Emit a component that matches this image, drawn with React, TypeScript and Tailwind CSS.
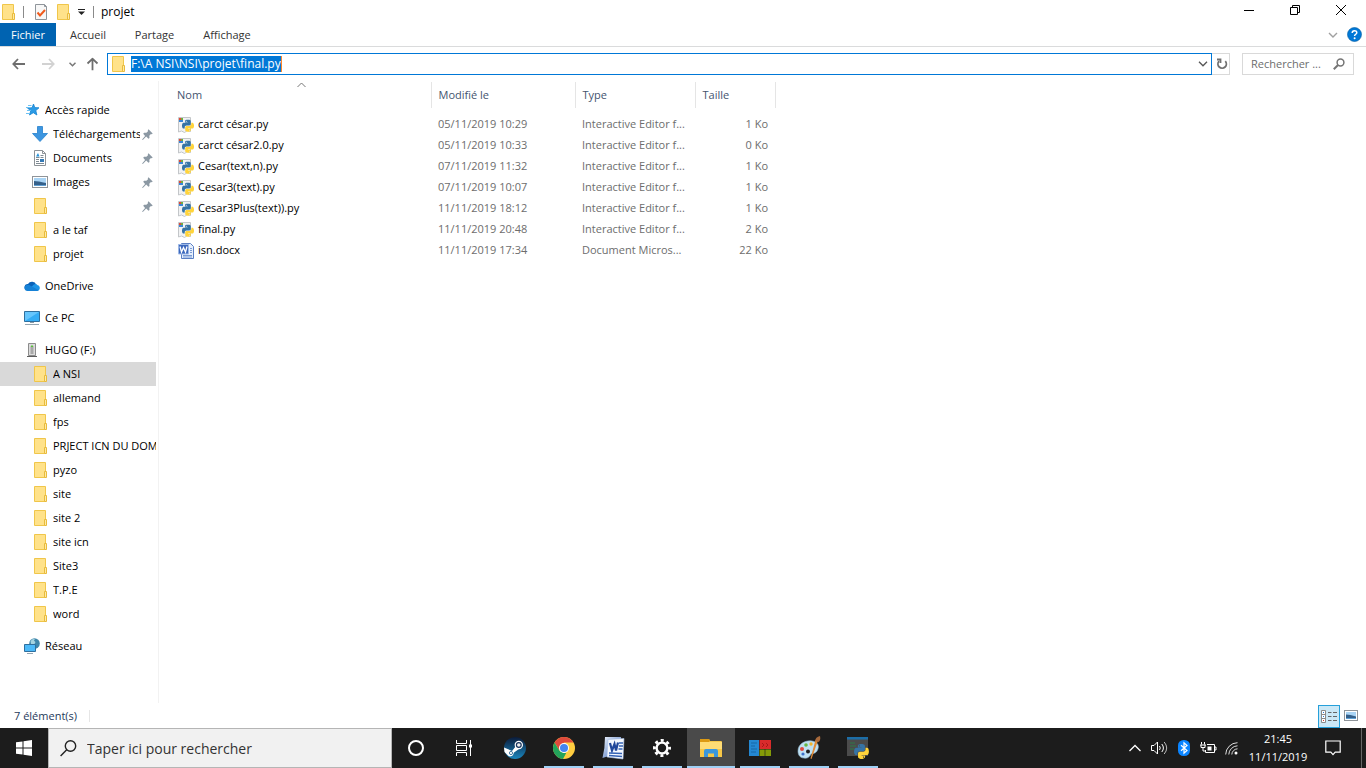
import type { ReactNode } from 'react';

type IconName = 'star' | 'download' | 'document' | 'images' | 'folder' | 'onedrive' | 'pc' | 'usb' | 'network';

interface NavItem {
  icon: IconName;
  label: string;
  root?: boolean;
  pinned?: boolean;
  selected?: boolean;
}

interface FileRow {
  name: string;
  date: string;
  type: string;
  size: string;
}

const NAV_GROUPS: NavItem[][] = [
  [
    { icon: 'star', label: 'Accès rapide', root: true },
    { icon: 'download', label: 'Téléchargements', pinned: true },
    { icon: 'document', label: 'Documents', pinned: true },
    { icon: 'images', label: 'Images', pinned: true },
    { icon: 'folder', label: '', pinned: true },
    { icon: 'folder', label: 'a le taf' },
    { icon: 'folder', label: 'projet' },
  ],
  [{ icon: 'onedrive', label: 'OneDrive', root: true }],
  [{ icon: 'pc', label: 'Ce PC', root: true }],
  [
    { icon: 'usb', label: 'HUGO (F:)', root: true },
    { icon: 'folder', label: 'A NSI', selected: true },
    { icon: 'folder', label: 'allemand' },
    { icon: 'folder', label: 'fps' },
    { icon: 'folder', label: 'PRJECT ICN DU DOM' },
    { icon: 'folder', label: 'pyzo' },
    { icon: 'folder', label: 'site' },
    { icon: 'folder', label: 'site 2' },
    { icon: 'folder', label: 'site icn' },
    { icon: 'folder', label: 'Site3' },
    { icon: 'folder', label: 'T.P.E' },
    { icon: 'folder', label: 'word' },
  ],
  [{ icon: 'network', label: 'Réseau', root: true }],
];

const FILES: FileRow[] = [
  { name: 'carct césar.py', date: '05/11/2019 10:29', type: 'Interactive Editor f...', size: '1 Ko' },
  { name: 'carct césar2.0.py', date: '05/11/2019 10:33', type: 'Interactive Editor f...', size: '0 Ko' },
  { name: 'Cesar(text,n).py', date: '07/11/2019 11:32', type: 'Interactive Editor f...', size: '1 Ko' },
  { name: 'Cesar3(text).py', date: '07/11/2019 10:07', type: 'Interactive Editor f...', size: '1 Ko' },
  { name: 'Cesar3Plus(text)).py', date: '11/11/2019 18:12', type: 'Interactive Editor f...', size: '1 Ko' },
  { name: 'final.py', date: '11/11/2019 20:48', type: 'Interactive Editor f...', size: '2 Ko' },
  { name: 'isn.docx', date: '11/11/2019 17:34', type: 'Document Micros...', size: '22 Ko' },
];

export default function App() {
  return (
    <div className="flex h-screen flex-col overflow-hidden bg-white font-['Open_Sans','Noto_Sans',sans-serif] text-[11px] text-black">
      <TitleBar />
      <Ribbon />
      <AddressRow />
      <main className="flex min-h-0 flex-1">
        <Sidebar />
        <FileTable />
      </main>
      <StatusBar />
      <Taskbar />
    </div>
  );
}

function TitleBar() {
  return (
    <header className="flex h-[23px] shrink-0 items-center">
      <FolderIcon />
      <span className="ml-[7px] h-3 w-px bg-[#8a8a8a]" />
      <button type="button" aria-label="Propriétés" className="ml-[9px]">
        <svg width="16" height="16" viewBox="0 0 16 16">
          <path d="M2.500.5h9l2 2v13h-11z" fill="#f7f7f7" stroke="#8f959b" />
          <path d="M11.500.5v2h2" fill="none" stroke="#8f959b" />
          <path d="M4.500 8.500l2.500 3 5-5.500" fill="none" stroke="#f05a1c" strokeWidth="2" />
        </svg>
      </button>
      <button type="button" aria-label="Nouveau dossier" className="ml-1.5">
        <FolderIcon />
      </button>
      <button type="button" aria-label="Personnaliser" className="ml-1.5">
        <svg width="9" height="8" viewBox="0 0 9 8">
          <path d="M1 1.500h7" stroke="#222" />
          <path d="M1 3.500h7l-3.500 3.500z" fill="#222" />
        </svg>
      </button>
      <span className="ml-[7px] h-3 w-px bg-[#8a8a8a]" />
      <h1 className="ml-[7px] text-xs">projet</h1>
      <div className="mr-0.5 ml-auto flex items-center pb-1">
        <button type="button" aria-label="Réduire" className="flex w-[46px] justify-center">
          <svg width="10" height="10" viewBox="0 0 10 10">
            <path d="M0 5.500h10" stroke="#000" />
          </svg>
        </button>
        <button type="button" aria-label="Restaurer" className="flex w-[46px] justify-center">
          <svg width="10" height="10" viewBox="0 0 10 10" fill="none" stroke="#000">
            <path d="M.5 2.500h7v7h-7zM2.500 2.500v-2h7v7h-2" />
          </svg>
        </button>
        <button type="button" aria-label="Fermer" className="flex w-[46px] justify-center">
          <svg width="10" height="10" viewBox="0 0 10 10" stroke="#000">
            <path d="M0 0l10 10M10 0L0 10" />
          </svg>
        </button>
      </div>
    </header>
  );
}

function Ribbon() {
  return (
    <nav className="flex h-6 shrink-0 items-stretch border-b border-[#dadbdc] text-[#333]">
      <button type="button" className="w-14 bg-[#0063b1] pt-0.5 text-white">Fichier</button>
      <button type="button" className="w-16 pt-0.5">Accueil</button>
      <button type="button" className="w-[69px] pt-0.5">Partage</button>
      <button type="button" className="w-[76px] pt-0.5">Affichage</button>
      <button type="button" aria-label="Développer le ruban" className="ml-auto">
        <svg width="10" height="6" viewBox="0 0 10 6" fill="none" stroke="#a0a0a0" strokeWidth="1.400">
          <path d="M1 1l4 4 4-4" />
        </svg>
      </button>
      <button type="button" aria-label="Aide" className="mr-1 ml-[9px]">
        <svg width="15" height="15" viewBox="0 0 15 15">
          <circle cx="7.500" cy="7.500" r="7" fill="#0078d7" stroke="#005a9e" strokeWidth=".6" />
          <path d="M5.200 6c0-3 4.600-3 4.600-.3 0 1.500-2.200 1.600-2.200 3.200" fill="none" stroke="#fff" strokeWidth="1.500" />
          <circle cx="7.600" cy="11.200" r="1" fill="#fff" />
        </svg>
      </button>
    </nav>
  );
}

function AddressRow() {
  return (
    <div className="flex h-[34px] shrink-0 items-center">
      <button type="button" aria-label="Précédent" className="ml-3">
        <ArrowIcon className="text-[#6e6e6e]" />
      </button>
      <button type="button" aria-label="Suivant" className="ml-[17px]">
        <ArrowIcon className="rotate-180 text-[#d2d2d2]" />
      </button>
      <button type="button" aria-label="Emplacements récents" className="ml-3.5">
        <svg width="7" height="5" viewBox="0 0 7 5" fill="none" stroke="#777" strokeWidth="1.500">
          <path d="M.5.8l3 3 3-3" />
        </svg>
      </button>
      <button type="button" aria-label="Dossier parent" className="ml-2.5">
        <ArrowIcon className="rotate-90 text-[#6e6e6e]" />
      </button>
      <div className="ml-2 flex h-[22px] min-w-0 flex-1 items-center border border-[#0078d7] pl-0.5">
        <FolderIcon />
        <input
          aria-label="Adresse"
          defaultValue="F:\A NSI\NSI\projet\final.py"
          className="ml-[5px] h-4 field-sizing-content border-r border-[#ff8728] bg-[#0078d7] text-xs text-white outline-none"
        />
        <button type="button" aria-label="Adresses précédentes" className="mr-[3px] ml-auto">
          <svg width="10" height="6" viewBox="0 0 10 6" fill="none" stroke="#555" strokeWidth="1.300">
            <path d="M1 .8l4 4 4-4" />
          </svg>
        </button>
      </div>
      <button type="button" aria-label="Actualiser" className="flex h-[22px] w-[18px] items-center justify-center border border-l-0 border-[#d9d9d9] pl-0.5">
        <svg width="12" height="12" viewBox="0 0 12 12" fill="none" stroke="#707070" strokeWidth="1.800">
          <path d="M9.300 3.200A4.200 4.200 0 1 1 3 3.200" />
          <path d="M1 1.500h3.500V5" />
        </svg>
      </button>
      <label className="mr-3 ml-3 flex h-[22px] w-28 items-center border border-[#d9d9d9] pr-2 pl-2">
        <input
          aria-label="Rechercher dans projet"
          placeholder="Rechercher ..."
          className="w-20 flex-1 placeholder-[#6d6d6d] outline-none"
        />
        <svg width="12" height="12" viewBox="0 0 12 12" fill="none" stroke="#757575">
          <circle cx="7.500" cy="4.500" r="3.400" strokeWidth="1.500" />
          <path d="M5 7L.8 11.200" strokeWidth="2" />
        </svg>
      </label>
    </div>
  );
}

function Sidebar() {
  return (
    <aside className="flex w-[159px] shrink-0 flex-col gap-2 overflow-hidden border-r border-[#f2f2f2] pt-[17px] pr-0.5">
      {NAV_GROUPS.map((group) => (
        <ul key={group[0].label}>
          {group.map((item, i) => (
            <NavRow key={i} item={item} />
          ))}
        </ul>
      ))}
    </aside>
  );
}

function NavRow({ item }: { item: NavItem }) {
  const indent = item.root ? 'pl-6' : 'pl-8';
  const bg = item.selected ? 'bg-[#d9d9d9]' : '';
  return (
    <li>
      <a href="#" aria-label={item.label || 'Dossier'} className={`flex h-6 items-center ${indent} ${bg}`}>
        <NavIcon name={item.icon} />
        <span className="ml-[5px] min-w-0 flex-1 overflow-hidden whitespace-nowrap">{item.label}</span>
        {item.pinned && <PinIcon />}
      </a>
    </li>
  );
}

function FileTable() {
  return (
    <section className="min-w-0 flex-1 pt-px pl-2.5">
      <table className="table-fixed border-collapse text-left whitespace-nowrap">
        <colgroup>
          <col className="w-[262px]" />
          <col className="w-36" />
          <col className="w-[120px]" />
          <col className="w-20" />
        </colgroup>
        <thead className="text-[#44546f]">
          <tr className="h-[26px]">
            <th className="relative border-r border-[#e5e5e5] pl-2 font-normal">
              Nom
              <svg className="absolute top-0 left-32" width="9" height="6" viewBox="0 0 9 6" fill="none" stroke="#777">
                <path d="M.5 5l4-4 4 4" />
              </svg>
            </th>
            <th className="border-r border-[#e5e5e5] pl-[7px] font-normal">Modifié le</th>
            <th className="border-r border-[#e5e5e5] pl-[7px] font-normal">Type</th>
            <th className="border-r border-[#e5e5e5] pl-[7px] font-normal">Taille</th>
          </tr>
        </thead>
        <tbody className="text-[#6d6d6d] before:block before:h-1.5">
          {FILES.map((file) => (
            <tr key={file.name} className="h-[21px]">
              <td className="p-0 pl-[9px] text-black">
                <div className="flex items-center gap-1">
                  {file.name.endsWith('.py') ? <PyFileIcon /> : <WordFileIcon />}
                  {file.name}
                </div>
              </td>
              <td className="p-0 pl-[7px]">{file.date}</td>
              <td className="p-0 pl-[7px]">{file.type}</td>
              <td className="p-0 pr-[7px] text-right">{file.size}</td>
            </tr>
          ))}
        </tbody>
      </table>
    </section>
  );
}

function StatusBar() {
  return (
    <footer className="flex h-[25px] shrink-0 items-center pl-3.5 text-[#1e395b]">
      <span className="pt-0.5">7 élément(s)</span>
      <span className="ml-3 h-3 w-px bg-[#e6e6e6]" />
      <button type="button" aria-label="Détails" className="ml-auto flex h-[23px] w-[22px] items-center justify-center self-end border border-[#26a0da] bg-[#cbe8f6]">
        <svg width="16" height="13" viewBox="0 0 16 13" fill="none">
          <path d="M.5.500h4v12h-4zM.5 4.500h4M.5 8.500h4" fill="#fff" stroke="#8a8a8a" />
          <path d="M7 2.500h3.500M12 2.500h4M7 6.500h3.500M12 6.500h4M7 10.500h3.500M12 10.500h4" stroke="#666" />
          <path d="M2 2.500h1M2 6.500h1" stroke="#2a7bd0" />
          <path d="M2 10.500h1" stroke="#d03b2a" />
        </svg>
      </button>
      <button type="button" aria-label="Grandes icônes" className="mr-2 ml-1">
        <svg width="14" height="11" viewBox="0 0 14 11">
          <PictureShape w={14} h={11} />
        </svg>
      </button>
    </footer>
  );
}

function Taskbar() {
  return (
    <div className="flex h-10 shrink-0 bg-[#1c1c1c]">
      <button type="button" aria-label="Démarrer" className="flex w-12 items-center justify-center">
        <svg width="16" height="16" viewBox="0 0 16 16" fill="#fff">
          <path d="M0 2.300L6.500 1.400v6.100H0zM7.500 1.200L16 0v7.500H7.500zM0 8.500h6.500v6.100L0 13.700zM7.500 8.500H16V16l-8.500-1.200z" />
        </svg>
      </button>
      <label className="flex w-[344px] items-center border border-[#b5b5b5] bg-[#f1f1f1] pl-[11px]">
        <svg width="17" height="17" viewBox="0 0 17 17" fill="none" stroke="#222" strokeWidth="1.400">
          <circle cx="10.500" cy="6" r="5.200" />
          <path d="M6.700 9.700L.6 16" />
        </svg>
        <input
          aria-label="Taper ici pour rechercher"
          placeholder="Taper ici pour rechercher"
          className="ml-2.5 min-w-0 flex-1 pt-0.5 text-sm placeholder-[#333] outline-none"
        />
      </label>
      <TaskButton label="Cortana">
        <svg width="18" height="18" viewBox="0 0 18 18" fill="none" stroke="#fff" strokeWidth="2">
          <circle cx="9" cy="9" r="7" />
        </svg>
      </TaskButton>
      <TaskButton label="Affichage des tâches">
        <svg width="18" height="16" viewBox="0 0 18 16" fill="none" stroke="#fff">
          <path d="M1.500 0v3.500h10V0M1.500 16v-3.500h10V16M1.500 5.500h10v5h-10zM15.500 0v16" />
          <path d="M14 4.500h3v3h-3z" fill="#fff" stroke="none" />
        </svg>
      </TaskButton>
      <div className="ml-[3px] flex gap-px">
        <TaskButton label="Steam">
          <SteamIcon />
        </TaskButton>
        <TaskButton label="Google Chrome" running>
          <ChromeIcon />
        </TaskButton>
        <TaskButton label="Word" running>
          <WordAppIcon />
        </TaskButton>
        <TaskButton label="Paramètres" running>
          <GearIcon />
        </TaskButton>
        <TaskButton label="Explorateur de fichiers" running active>
          <ExplorerIcon />
        </TaskButton>
        <TaskButton label="Tuiles" running>
          <TilesIcon />
        </TaskButton>
        <TaskButton label="Paint" running>
          <PaintIcon />
        </TaskButton>
        <TaskButton label="Python" running>
          <PyConsoleIcon />
        </TaskButton>
      </div>
      <Tray />
    </div>
  );
}

function TaskButton({
  label,
  running,
  active,
  children,
}: {
  label: string;
  running?: boolean;
  active?: boolean;
  children: ReactNode;
}) {
  return (
    <button
      type="button"
      aria-label={label}
      className={`relative flex h-10 w-12 items-center justify-center ${active ? 'bg-[#4a4a4a]' : ''}`}
    >
      {children}
      {running && (
        <span className={`absolute bottom-0 h-0.5 bg-[#9fd0f5] ${active ? 'inset-x-0' : 'inset-x-1'}`} />
      )}
    </button>
  );
}

function Tray() {
  return (
    <div className="ml-auto flex items-center text-white">
      <button type="button" aria-label="Icônes cachées">
        <svg width="12" height="8" viewBox="0 0 12 8" fill="none" stroke="#fff" strokeWidth="1.300">
          <path d="M.5 7L6 1.500 11.500 7" />
        </svg>
      </button>
      <button type="button" aria-label="Volume" className="ml-2.5">
        <svg width="17" height="14" viewBox="0 0 17 14" fill="none" stroke="#fff">
          <path d="M.5 4.500h2.500L6.500 1v12L3 9.500H.5z" />
          <path d="M8.500 5q1.500 2 0 4M10.800 3q3.200 4 0 8" />
          <path d="M13.200 1q5 6 0 12" stroke="#bbb" />
        </svg>
      </button>
      <button type="button" aria-label="Bluetooth" className="ml-2.5">
        <svg width="12" height="16" viewBox="0 0 12 16">
          <rect width="12" height="16" rx="5.500" fill="#0a84ff" />
          <path d="M3 5.200l6 5.300-3 2.700V2.800l3 2.700-6 5.300" fill="none" stroke="#fff" strokeWidth="1.200" />
        </svg>
      </button>
      <button type="button" aria-label="Batterie" className="ml-2.5">
        <svg width="17" height="12" viewBox="0 0 17 12" fill="none" stroke="#fff">
          <path d="M7 2.500h7.500v8h-9V8M14.500 5h1.500v3h-1.500" />
          <path d="M7.500 4.500h4v4h-4z" fill="#fff" stroke="none" />
          <path d="M1.500 0v2.500M4.500 0v2.500M0 3h6M1 3v2.500h4V3M3 5.500V9h2.500" />
        </svg>
      </button>
      <button type="button" aria-label="Réseau sans fil" className="ml-2">
        <svg width="14" height="13" viewBox="0 0 14 13" fill="none" stroke="#ddd">
          <path d="M.7 12.500A12 12 0 0 1 12.500.7M3.800 12.500a9 9 0 0 1 8.700-8.700M6.800 12.500a6 6 0 0 1 5.700-5.700" />
          <circle cx="11" cy="11" r="1.500" fill="#fff" stroke="none" />
        </svg>
      </button>
      <time className="ml-2 w-[62px] text-center leading-[18px]">
        21:45
        <br />
        11/11/2019
      </time>
      <button type="button" aria-label="Notifications" className="ml-4">
        <svg width="16" height="16" viewBox="0 0 16 16" fill="none" stroke="#fff" strokeWidth="1.200">
          <path d="M.8 1h14.400v11.200h-5L8 14.700l-2.200-2.500h-5z" />
        </svg>
      </button>
      <span className="mr-1 ml-5 h-10 w-px bg-[#666]" />
    </div>
  );
}

function NavIcon({ name }: { name: IconName }) {
  if (name === 'folder') return <FolderIcon />;
  return (
    <svg width="16" height="16" viewBox="0 0 16 16" className="shrink-0">
      {name === 'star' && (
        <>
          <path d="M9.500 2l1.300 3.600 4.200.2-3.200 2.800 1.100 4.400-3.600-2.300L5.500 13l1.200-4.200L3.500 6l4.500-.2z" fill="#2b9be6" stroke="#1583d0" strokeWidth=".8" />
          <path d="M4 3.500h3.500M2 5.500h3M3 8.500h4M2 11.500h4" stroke="#6cc1f3" />
        </>
      )}
      {name === 'download' && <path d="M5.500.5h5v7h5L8 15.500.5 7.500h5z" fill="#3d96e0" stroke="#2580cc" strokeWidth=".8" />}
      {name === 'document' && (
        <>
          <path d="M2.500.5h8l3 3v12h-11z" fill="#fff" stroke="#8d9297" />
          <path d="M10.500.500v3h3" fill="none" stroke="#8d9297" />
          <path d="M4 7.500h3.500M8.500 5.500h3M8.500 7.500h3M4 9.500h3M4 11.500h3M4 13.500h8" stroke="#7e8a93" />
          <path d="M4 6.500L6 3l1.500 3.500z" fill="#2794dc" />
          <path d="M8 9h4v3H8z" fill="#3479b5" />
        </>
      )}
      {name === 'images' && (
        <g transform="translate(0 2)">
          <PictureShape w={16} h={12} />
        </g>
      )}
      {name === 'onedrive' && (
        <>
          <path d="M4 6a4.600 4.600 0 0 1 8.300.7L7 12H3A3 3 0 0 1 4 6z" fill="#0a61b8" />
          <path d="M9.500 6.800a3.200 3.200 0 0 1 4.200.5c3 .6 2.800 5.500-.7 5.700H3.500z" fill="#1f95e6" />
          <path d="M.5 10c0-3 3.500-4.300 6-2.300L14.500 12q-.6 1-2 1h-9Q.7 13 .5 10z" fill="#1681d6" />
        </>
      )}
      {name === 'pc' && (
        <>
          <path d="M.5 1.500h15v10H.5z" fill="#35adf5" stroke="#2f6f9e" />
          <path d="M1 2h14L1 11z" fill="#66c6fd" />
          <path d="M6 12h4v1H6z" fill="#8a9aa5" />
          <path d="M1 14.500h14" stroke="#93a4b0" />
        </>
      )}
      {name === 'usb' && (
        <>
          <path d="M4.500 1.500h7v12h-7z" fill="#dcdcdc" stroke="#8c8c8c" />
          <path d="M6.500 4h3v8h-3z" fill="#a8a8a8" />
          <path d="M7 3.500h2v1.500H7z" fill="#58c33b" />
          <path d="M3 14.500h10" stroke="#5d5d5d" />
        </>
      )}
      {name === 'network' && (
        <>
          <circle cx="10.500" cy="5.500" r="5.300" fill="#3f86aa" />
          <path d="M6.500 3q2-2.500 4.500-2.300l-1 2 1.500 1.300-1 2H7z" fill="#a5d3e0" />
          <path d="M.5 6.500h11v7H.5z" fill="#4cb9f8" stroke="#2f6f9e" />
          <path d="M3 15.500h6" stroke="#93a4b0" />
        </>
      )}
    </svg>
  );
}

function FolderIcon() {
  return (
    <svg width="16" height="16" viewBox="0 0 16 16" className="shrink-0">
      <path d="M2.500.5h11v15h-11z" fill="#ffe28a" stroke="#f0c64a" />
      <path d="M12.500 9.500h2v6h-2z" fill="#ffeaa6" stroke="#e8bb3c" />
    </svg>
  );
}

function PictureShape({ w, h }: { w: number; h: number }) {
  return (
    <>
      <rect x=".5" y=".5" width={w - 1} height={h - 1} fill="#fff" stroke="#8f9499" />
      <rect x="2" y="2" width={w - 4} height={h - 4} fill="#a9d4f5" />
      <path d={`M2 ${h / 2 - 1}q4 0 ${w - 4} 2V${h - 2}H2z`} fill="#35608a" />
      <path d={`M2 ${h - 3}H${w - 2}V${h - 2}H2z`} fill="#5f9fd4" />
    </>
  );
}

function PinIcon() {
  return (
    <svg width="11" height="11" viewBox="0 0 11 11" className="mr-[3px] ml-0.5 shrink-0" fill="#8b98a3">
      <path d="M6.500.3l4.200 4.200-1 .8-.8-.2-1.600 1.600.2 2.300-1 .8-2.300-2.200L.8 11l-.7-.4 3-3.700L1.200 4.700l.9-1 2.300.1L6 2.200 5.800 1.200z" />
    </svg>
  );
}

function ArrowIcon({ className }: { className: string }) {
  return (
    <svg width="13" height="12" viewBox="0 0 13 12" fill="none" stroke="currentColor" strokeWidth="1.800" className={className}>
      <path d="M6 1L1.300 6 6 11M1.500 6H13" />
    </svg>
  );
}

function PythonLogo() {
  return (
    <>
      <path
        fill="#3673a5"
        d="M167.800 248.100h106.800c29.700 0 53.400-24.500 53.400-54.300V91.900c0-29-24.400-50.700-53.400-55.600-35.800-5.900-74.700-5.600-106.800.1-45.200 8-53.400 24.700-53.400 55.600v40.700h106.900v13.600h-147c-31.100 0-58.300 18.700-66.800 54.200-9.800 40.700-10.200 66.100 0 108.600 7.600 31.600 25.700 54.200 56.800 54.200H101v-48.800c0-35.300 30.500-66.400 66.800-66.400zm-6.700-142.600c-11.100 0-20.100-9.100-20.100-20.300.1-11.300 9-20.400 20.100-20.400 11 0 20.100 9.200 20.100 20.400s-9 20.300-20.100 20.300z"
      />
      <path
        fill="#ffd43b"
        d="M439.800 200.500c-7.700-30.900-22.300-54.200-53.400-54.200h-40.100v47.400c0 36.800-31.200 67.800-66.800 67.800H172.700c-29.200 0-53.400 25-53.400 54.300v101.800c0 29 25.200 46 53.400 54.300 33.800 9.900 66.300 11.700 106.800 0 26.900-7.800 53.400-23.500 53.400-54.300v-40.700H226.200v-13.600h160.200c31.100 0 42.600-21.700 53.400-54.200 11.200-33.500 10.700-65.700 0-108.600zM286.200 404c11.100 0 20.100 9.100 20.100 20.300 0 11.300-9 20.400-20.100 20.400-11 0-20.100-9.200-20.100-20.400.1-11.300 9.100-20.300 20.100-20.300z"
      />
    </>
  );
}

function PyFileIcon() {
  return (
    <svg width="16" height="16" viewBox="0 0 16 16" className="shrink-0">
      <path d="M.5.5h12v14l-3-1-3 2-3-1.500-3 1z" fill="#f1f2f3" stroke="#c3c6c9" />
      <path d="M1 1h2v2H1z" fill="#e04a3a" />
      <path d="M3 1h2v2H3z" fill="#6fae3e" />
      <path d="M1 3h4v2H1z" fill="#3a86d8" />
      <svg x="4" y="1.500" width="12" height="14.500" viewBox="0 0 448 512">
        <PythonLogo />
      </svg>
    </svg>
  );
}

// small document variant: blue tile in front of the page
function WordFileIcon() {
  return (
    <svg width="16" height="16" viewBox="0 0 16 16" className="shrink-0">
      <path d="M3.500.5h9l3 3v12h-12z" fill="#e6effc" stroke="#5a7fc4" />
      <path d="M12 5.500h2M12 7.500h2M12 9.500h2M5 12.500h9M5 14h9" stroke="#7b9bd4" />
      <path d="M.5 1.500h10v9.500H.5z" fill="#3c68bd" stroke="#9db8e6" />
      <path d="M2 3.500l1.500 5.500 2-4.500 2 4.500L9 3.500" fill="none" stroke="#fff" strokeWidth="1.300" />
    </svg>
  );
}

function WordAppIcon() {
  return (
    <svg width="24" height="24" viewBox="0 0 24 24">
      <defs>
        <linearGradient id="word" x1="0" y1="0" x2="1" y2="1">
          <stop offset="0" stopColor="#eef4fd" />
          <stop offset="1" stopColor="#3563b5" />
        </linearGradient>
      </defs>
      <path d="M4 1h16l-1 17q-9 .5-17.500 4Q4 12 4 1z" fill="url(#word)" />
      <path d="M7 3.500l16-1-1 20.500-16-2z" fill="#f4f8fe" stroke="#a9c1e8" strokeWidth=".6" />
      <path d="M9 7l2 7.500 2.500-6.500 1.500 6.500L17 6.500" fill="none" stroke="#1f479b" strokeWidth="2.200" />
      <path d="M18 7h4M18 10h4M17.500 13h4M8 17l13 .5M8 19.500l13 1" stroke="#3563b5" strokeWidth="1.500" />
    </svg>
  );
}

function SteamIcon() {
  return (
    <svg width="24" height="24" viewBox="0 0 24 24">
      <defs>
        <linearGradient id="steam" x1="0" y1="0" x2="0" y2="1">
          <stop offset="0" stopColor="#0b1b3a" />
          <stop offset="1" stopColor="#1a86bd" />
        </linearGradient>
      </defs>
      <circle cx="12" cy="12" r="11" fill="url(#steam)" />
      <path d="M1 11.500l8 3.400 4-5 3 3-5 3.500-1 2.500a3.200 3.200 0 0 1-5 .5L1.500 16z" fill="#fff" />
      <circle cx="15.800" cy="9" r="4.200" fill="#fff" />
      <circle cx="15.800" cy="9" r="2.400" fill="#eee" stroke="#17335c" strokeWidth="1.200" />
      <circle cx="8" cy="17" r="1.600" fill="none" stroke="#1b5c8c" strokeWidth=".8" />
    </svg>
  );
}

function ChromeIcon() {
  return (
    <svg width="22" height="22" viewBox="0 0 22 22">
      <circle cx="11" cy="11" r="11" fill="#ffcd40" />
      <path d="M1.500 5.500A11 11 0 0 1 20.500 5.500H11L6.500 13.500z" fill="#df4a3c" />
      <path d="M1.500 5.500l5 8.300L11 16l2.200 0L10 22A11 11 0 0 1 1.500 5.500z" fill="#23a35b" />
      <circle cx="11" cy="11" r="5" fill="#fff" />
      <circle cx="11" cy="11" r="4" fill="#4485f0" />
    </svg>
  );
}

function GearIcon() {
  return (
    <svg width="20" height="20" viewBox="0 0 20 20" fill="none" stroke="#fff">
      <circle cx="10" cy="10" r="5.400" strokeWidth="2.400" />
      <circle cx="10" cy="10" r="7.600" strokeWidth="2.800" strokeDasharray="3 2.969" strokeDashoffset="1.500" />
    </svg>
  );
}

function ExplorerIcon() {
  return (
    <svg width="22" height="18" viewBox="0 0 22 18">
      <path d="M0 1q0-1 1-1h8l1 2h11q1 0 1 1v15H0z" fill="#f7c748" />
      <path d="M0 0h9l1 1.500-1 1.500H0z" fill="#dc9a14" />
      <path d="M0 3h22v7H0z" fill="#ffdc75" />
      <path d="M4 18v-6q0-2 2-2h10q2 0 2 2v6h-4v-3.500H8V18z" fill="#3b97dd" />
    </svg>
  );
}

function TilesIcon() {
  return (
    <svg width="22" height="16" viewBox="0 0 22 16">
      <path d="M0 0h10v16H0z" fill="#2488d2" />
      <path d="M2 3h6M2 6h4M2 9h6M2 12h5" stroke="#1766a6" />
      <path d="M10.500 0H22v9H10.500z" fill="#d92b2b" />
      <path d="M13 3l2 2-2 2M17 3l2 2-2 2" fill="none" stroke="#a81818" />
      <path d="M10.500 9.500h5.200V16h-5.200zM16.300 9.500H22V16h-5.700z" fill="#849b08" />
    </svg>
  );
}

function PaintIcon() {
  return (
    <svg width="24" height="24" viewBox="0 0 24 24">
      <path d="M1 15C1 8 8 4 15 5c6 1 8 5 5 10-2 3-4 2-6 3-1 2-3 5-7 4-4 0-6-3-6-7z" fill="#bfe0f2" stroke="#8fb9d0" strokeWidth=".6" />
      <circle cx="5" cy="13" r="2" fill="#e0483e" />
      <circle cx="9" cy="9" r="1.800" fill="#67b743" />
      <circle cx="14" cy="8" r="1.700" fill="#f2b42d" />
      <circle cx="11" cy="15.500" r="2" fill="#1c1c1c" />
      <circle cx="6" cy="18" r="1.600" fill="#3b70c9" />
      <path d="M21 4.500L14.500 23l-1-.5L18.500 4z" fill="#e08a36" />
      <path d="M18 5q.5-4 5-5 1 4-1.500 6z" fill="#a86a3c" />
    </svg>
  );
}

function PyConsoleIcon() {
  return (
    <svg width="24" height="24" viewBox="0 0 24 24">
      <path d="M1 2h21v18H1z" fill="#4b4b4b" />
      <path d="M1 1h21v2.500H1z" fill="#1c6ea8" />
      <path d="M4 7h5M4 10h6M4 13h4" stroke="#2e7a48" />
      <svg x="7" y="7" width="17" height="17" viewBox="0 0 448 512">
        <g transform="translate(0 0)">
          <PythonLogo />
        </g>
      </svg>
    </svg>
  );
}
